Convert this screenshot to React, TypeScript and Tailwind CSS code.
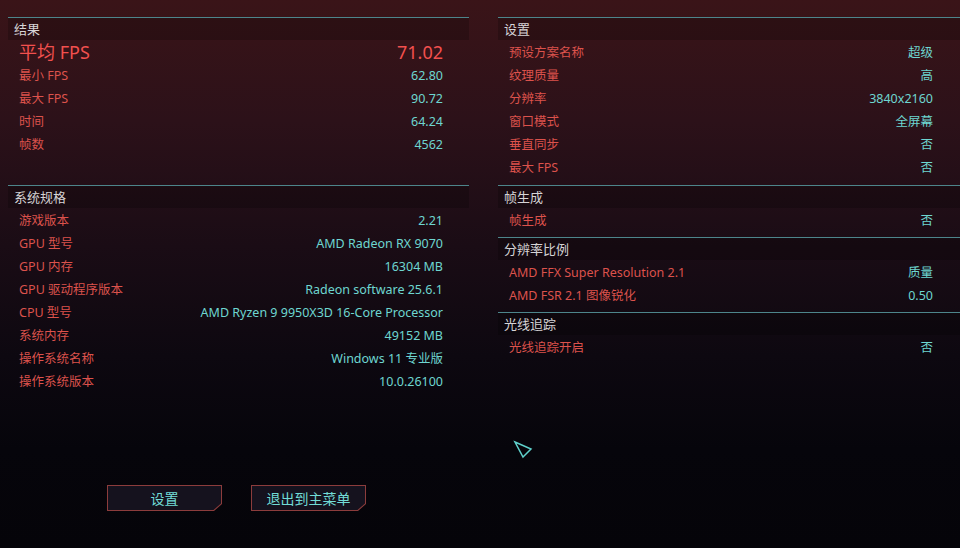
import React from "react";

type Row = [string, string];

const FONT = "font-['Noto_Sans','Noto_Sans_CJK_SC',sans-serif]";

function Section({
  title,
  rows,
  big,
  className = "",
  right = false,
}: {
  title: string;
  rows: Row[];
  big?: Row;
  className?: string;
  right?: boolean;
}) {
  const pr = right ? "pr-[27px]" : "pr-[26px]";
  return (
    <div className={`border-t border-[#4d858b] pb-[6px] ${className}`}>
      <div className="flex h-[22px] items-center bg-black/20 pl-[6px] pt-px text-[13px] text-[#d6d4d6]">
        {title}
      </div>
      {big && (
        <div className={`flex h-[23px] items-center justify-between pl-[11px] pt-px ${pr}`}>
          <span className="text-[18px] text-[#f2504e]">{big[0]}</span>
          <span className="text-[18px] text-[#f2504e]">{big[1]}</span>
        </div>
      )}
      {rows.map(([k, v]) => (
        <div
          key={k}
          className={`flex h-[23px] items-center justify-between pl-[11px] pt-[3px] text-[12.5px] ${pr}`}
        >
          <span className="text-[#dc524c]">{k}</span>
          <span className="text-[#6ed6d0]">{v}</span>
        </div>
      ))}
    </div>
  );
}

function CutButton({ label }: { label: string }) {
  return (
    <div className="h-[26px] w-[115px] bg-[#8c3c3c] p-px [clip-path:polygon(0_0,100%_0,100%_calc(100%-7px),calc(100%-8px)_100%,0_100%)]">
      <div className="flex h-full w-full items-center justify-center bg-[#15121e] text-[14px] text-[#72dcd6] [clip-path:polygon(0_0,100%_0,100%_calc(100%-6.5px),calc(100%-7.5px)_100%,0_100%)]">
        {label}
      </div>
    </div>
  );
}

export default function App() {
  return (
    <div
      className={`relative h-[548px] w-[960px] overflow-hidden bg-[linear-gradient(180deg,#3a1418_0%,#2c1119_22%,#1a0c15_45%,#0d0810_65%,#06050b_82%,#050409_100%)] ${FONT}`}
    >
      <div className="flex pt-[17px]">
        {/* Left column */}
        <div className="ml-[8px] flex w-[461px] flex-col">
          <Section
            className="h-[168px]"
            title="结果"
            big={["平均 FPS", "71.02"]}
            rows={[
              ["最小 FPS", "62.80"],
              ["最大 FPS", "90.72"],
              ["时间", "64.24"],
              ["帧数", "4562"],
            ]}
          />
          <Section
            title="系统规格"
            rows={[
              ["游戏版本", "2.21"],
              ["GPU 型号", "AMD Radeon RX 9070"],
              ["GPU 内存", "16304 MB"],
              ["GPU 驱动程序版本", "Radeon software 25.6.1"],
              ["CPU 型号", "AMD Ryzen 9 9950X3D 16-Core Processor"],
              ["系统内存", "49152 MB"],
              ["操作系统名称", "Windows 11 专业版"],
              ["操作系统版本", "10.0.26100"],
            ]}
          />
          <div className="mt-[87px] flex gap-[29px] pl-[99px]">
            <CutButton label="设置" />
            <CutButton label="退出到主菜单" />
          </div>
        </div>

        {/* Right column */}
        <div className="ml-[29px] flex flex-1 flex-col">
          <Section
            right
            className="h-[168px]"
            title="设置"
            rows={[
              ["预设方案名称", "超级"],
              ["纹理质量", "高"],
              ["分辨率", "3840x2160"],
              ["窗口模式", "全屏幕"],
              ["垂直同步", "否"],
              ["最大 FPS", "否"],
            ]}
          />
          <Section right title="帧生成" rows={[["帧生成", "否"]]} />
          <Section
            right
            title="分辨率比例"
            rows={[
              ["AMD FFX Super Resolution 2.1", "质量"],
              ["AMD FSR 2.1 图像锐化", "0.50"],
            ]}
          />
          <Section right title="光线追踪" rows={[["光线追踪开启", "否"]]} />
        </div>
      </div>

      {/* mouse cursor */}
      <svg
        className="absolute left-[513px] top-[439px]"
        width="22"
        height="22"
        viewBox="0 0 22 22"
        fill="none"
      >
        <path d="M2 3 L18 10 L10 18 Z" stroke="#5fd0cb" strokeWidth="1.5" strokeLinejoin="miter" />
      </svg>
    </div>
  );
}
